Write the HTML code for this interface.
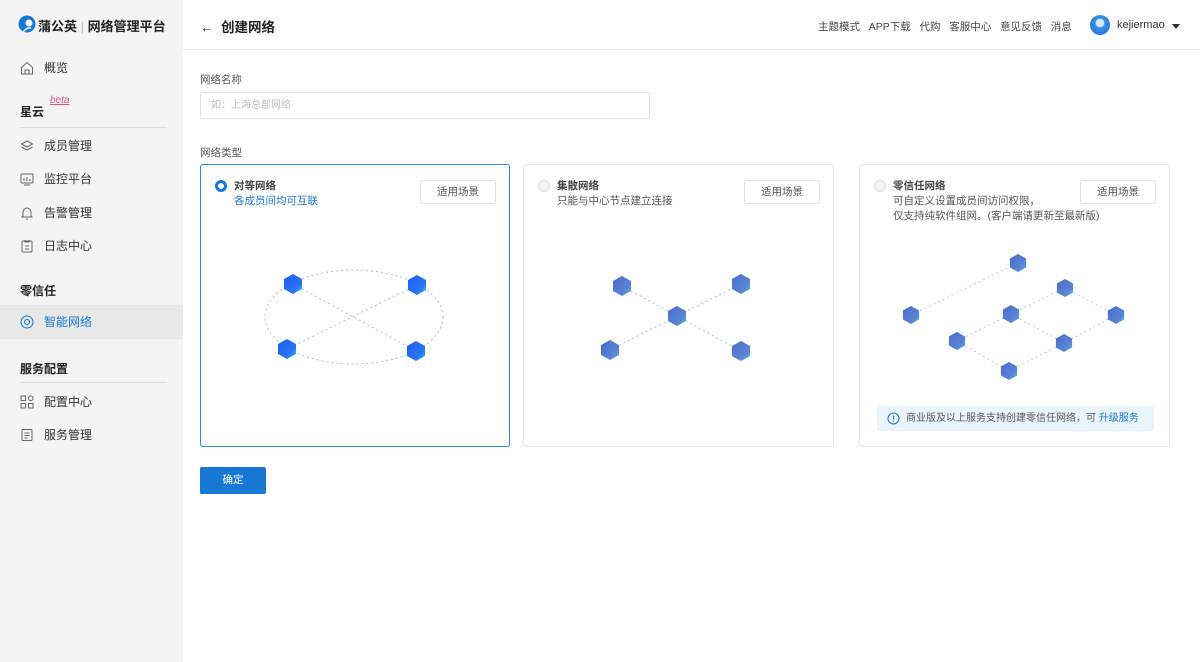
<!DOCTYPE html>
<html><head><meta charset="utf-8"><style>
*{margin:0;padding:0;box-sizing:border-box}
body{width:1200px;height:662px;overflow:hidden;font-family:"Liberation Sans","Noto Sans CJK SC",sans-serif;font-size:12px;color:#333;background:#fff;position:relative}
.side{position:absolute;left:0;top:0;width:183px;height:662px;background:#f4f4f4}
.abs{position:absolute;white-space:nowrap}
.item{position:absolute;left:0;width:183px;height:34px;line-height:34px;padding-left:44px;font-size:12px;color:#333}
.item svg{position:absolute;left:20px;top:10px}
.sec{position:absolute;left:20px;font-weight:bold;font-size:12px;color:#222}
.hr{position:absolute;left:20px;width:147px;height:1px;background:#ddd}
.card{position:absolute;top:164px;height:283px;border:1px solid #e6e6e6;border-radius:3px;background:#fff}
.btn{position:absolute;top:15px;right:13px;width:76px;height:24px;border:1px solid #e3e3e3;border-radius:2px;text-align:center;line-height:22px;font-size:10.5px;color:#555}
.radio{position:absolute;left:14px;top:15px;width:12px;height:12px;border-radius:50%;border:1px solid #ddd;background:#f3f3f3}
.t{position:absolute;left:33px;top:13px;font-weight:bold;font-size:10.5px;color:#444}
.d{position:absolute;left:33px;top:29px;font-size:10.5px;color:#555;line-height:15px}
</style></head><body>
<div class="side">
 <svg class="abs" style="left:18px;top:15px" width="18" height="18" viewBox="0 0 18 18"><circle cx="9" cy="9" r="8.5" fill="#1677d4"/><circle cx="11" cy="8" r="3.5" fill="#fff"/><path d="M5 17 Q9 12 13 13" stroke="#fff" stroke-width="1.5" fill="none"/></svg>
 <div class="abs" style="left:38px;top:16px;font-size:13px;font-weight:bold;color:#222">蒲公英 <span style="color:#bbb;font-weight:normal">|</span> 网络管理平台</div>
 <div class="item" style="top:51px"><svg width="14" height="14" viewBox="0 0 14 14" fill="none" stroke="#666"><path d="M1.5 6.5L7 1.5l5.5 5V13h-11z M5 13V9h4v4"/></svg>概览</div>
 <div class="sec" style="top:103px">星云</div><div class="abs" style="left:50px;top:95px;font-size:10px;color:#e0507a;font-style:italic;text-decoration:underline">beta</div>
 <div class="hr" style="top:127px"></div>
 <div class="item" style="top:129px"><svg width="14" height="14" viewBox="0 0 14 14" fill="none" stroke="#666"><path d="M7 2l5.5 3L7 8 1.5 5z M1.5 8L7 11l5.5-3"/></svg>成员管理</div>
 <div class="item" style="top:162px"><svg width="14" height="14" viewBox="0 0 14 14" fill="none" stroke="#666"><rect x="1" y="2" width="12" height="9" rx="1"/><path d="M4 9V6M7 9V5M10 9V7M4 13h6"/></svg>监控平台</div>
 <div class="item" style="top:196px"><svg width="14" height="14" viewBox="0 0 14 14" fill="none" stroke="#666"><path d="M3 10V6a4 4 0 018 0v4l1 1H2z M6 13h2"/></svg>告警管理</div>
 <div class="item" style="top:229px"><svg width="14" height="14" viewBox="0 0 14 14" fill="none" stroke="#666"><rect x="2" y="2" width="10" height="11" rx="1"/><path d="M5 1v2h4V1M5 7h4M5 10h4"/></svg>日志中心</div>
 <div class="sec" style="top:282px">零信任</div>
 <div class="item" style="top:305px;background:#e8e8e8;color:#1677d4"><svg width="14" height="14" viewBox="0 0 14 14" fill="none" stroke="#1677d4"><circle cx="7" cy="7" r="6"/><circle cx="7" cy="7" r="2.5"/></svg>智能网络</div>
 <div class="sec" style="top:360px">服务配置</div>
 <div class="hr" style="top:382px"></div>
 <div class="item" style="top:385px"><svg width="14" height="14" viewBox="0 0 14 14" fill="none" stroke="#666"><rect x="1" y="1" width="4.5" height="4.5"/><rect x="8.5" y="1" width="4.5" height="4.5" rx="2"/><rect x="1" y="8.5" width="4.5" height="4.5"/><rect x="8.5" y="8.5" width="4.5" height="4.5"/></svg>配置中心</div>
 <div class="item" style="top:418px"><svg width="14" height="14" viewBox="0 0 14 14" fill="none" stroke="#666"><rect x="2" y="1.5" width="10" height="11" rx="1"/><path d="M4.5 5h5M4.5 7.5h5M4.5 10h3"/></svg>服务管理</div>
</div>
<div class="abs" style="left:183px;top:49px;width:1017px;height:1px;background:#e8e8e8"></div>
<div class="abs" style="left:200px;top:16px;font-size:13.5px;font-weight:bold;color:#222">←&nbsp; 创建网络</div>
<div class="abs" style="left:818px;top:19px;font-size:10.5px;color:#444">主题模式&nbsp;&nbsp; APP下载&nbsp;&nbsp; 代购&nbsp;&nbsp; 客服中心&nbsp;&nbsp; 意见反馈&nbsp;&nbsp; 消息</div>
<div class="abs" style="left:1090px;top:15px;width:20px;height:20px;border-radius:50%;background:radial-gradient(circle at 50% 40%,#cfe6ff 0,#cfe6ff 25%,#3a8ee6 30%,#1e6fd1 100%)"></div>
<div class="abs" style="left:1117px;top:19px;font-size:11px;color:#333">kejiermao</div>
<div class="abs" style="left:1172px;top:24px;width:0;height:0;border-left:4px solid transparent;border-right:4px solid transparent;border-top:5px solid #333"></div>

<div class="abs" style="left:200px;top:72px;font-size:10.5px;color:#555">网络名称</div>
<div class="abs" style="left:200px;top:92px;width:450px;height:27px;border:1px solid #e3e3e3;border-radius:2px;padding-left:10px;line-height:25px;font-size:10px;color:#bbb">如：上海总部网络</div>
<div class="abs" style="left:200px;top:145px;font-size:10.5px;color:#555">网络类型</div>

<div class="card" style="left:200px;width:310px;border-color:#3b8ad8">
 <div class="radio" style="border:3.5px solid #1677d4;background:#fff"></div>
 <div class="t">对等网络</div><div class="d" style="color:#1677d4">各成员间均可互联</div><div class="btn">适用场景</div></div>
<div class="card" style="left:523px;width:311px">
 <div class="radio"></div><div class="t">集散网络</div><div class="d">只能与中心节点建立连接</div><div class="btn">适用场景</div></div>
<div class="card" style="left:859px;width:311px">
 <div class="radio"></div><div class="t">零信任网络</div><div class="d">可自定义设置成员间访问权限，<br>仅支持纯软件组网。(客户端请更新至最新版)</div><div class="btn">适用场景</div>
 <div class="abs" style="left:17px;top:241px;width:277px;height:25px;background:#eaf4fd;border-radius:2px;line-height:25px;padding-left:29px;font-size:10px;color:#555">商业版及以上服务支持创建零信任网络，可 <span style="color:#1677d4">升级服务</span></div>
 <svg class="abs" style="left:27px;top:247px" width="13" height="13" viewBox="0 0 13 13"><circle cx="6.5" cy="6.5" r="5.5" fill="none" stroke="#1677d4"/><path d="M6.5 3.5v4M6.5 8.8v1" stroke="#1677d4"/></svg>
</div>
<div class="abs" style="left:200px;top:467px;width:66px;height:27px;background:#1677d4;border-radius:2px;color:#fff;font-size:10.5px;text-align:center;line-height:27px">确定</div>

<svg class="abs" style="left:0;top:0" width="1200" height="662">
<defs>
<linearGradient id="g1" x1="0" y1="0" x2="1" y2="1"><stop offset="0" stop-color="#1a5ef0"/><stop offset="0.7" stop-color="#2a74f5"/><stop offset="1" stop-color="#2ad7f0"/></linearGradient>
<linearGradient id="g2" x1="0" y1="0" x2="1" y2="1"><stop offset="0" stop-color="#4a6bc8"/><stop offset="0.7" stop-color="#5a84d6"/><stop offset="1" stop-color="#4fc7c8"/></linearGradient>
<symbol id="c" viewBox="-10 -11 20 22"><path d="M0-10L9-5V5L0 10-9 5V-5z"/></symbol>
</defs>
<g fill="none" stroke="#a9bce6" stroke-dasharray="2 3" stroke-width="1">
<ellipse cx="354" cy="317" rx="89" ry="47"/>
<path d="M293 284L416 351M417 285L287 349"/>
<path d="M622 286L677 316L741 284M610 350L677 316L741 351"/>
<path d="M911 315L1018 263M957 341L1011 314L1065 288L1116 315M1011 314L1064 343M957 341L1009 371L1064 343L1116 315" stroke="#c4c8d8"/>
</g>
<g fill="url(#g1)">
<use href="#c" x="283" y="273" width="20" height="22"/><use href="#c" x="407" y="274" width="20" height="22"/>
<use href="#c" x="277" y="338" width="20" height="22"/><use href="#c" x="406" y="340" width="20" height="22"/>
</g>
<g fill="url(#g2)">
<use href="#c" x="612" y="275" width="20" height="22"/><use href="#c" x="731" y="273" width="20" height="22"/><use href="#c" x="667" y="305" width="20" height="22"/><use href="#c" x="600" y="339" width="20" height="22"/><use href="#c" x="731" y="340" width="20" height="22"/>
<use href="#c" x="1009" y="253" width="18" height="20"/><use href="#c" x="1056" y="278" width="18" height="20"/><use href="#c" x="902" y="305" width="18" height="20"/><use href="#c" x="1002" y="304" width="18" height="20"/><use href="#c" x="1107" y="305" width="18" height="20"/><use href="#c" x="948" y="331" width="18" height="20"/><use href="#c" x="1055" y="333" width="18" height="20"/><use href="#c" x="1000" y="361" width="18" height="20"/>
</g>
</svg>
</body></html>
